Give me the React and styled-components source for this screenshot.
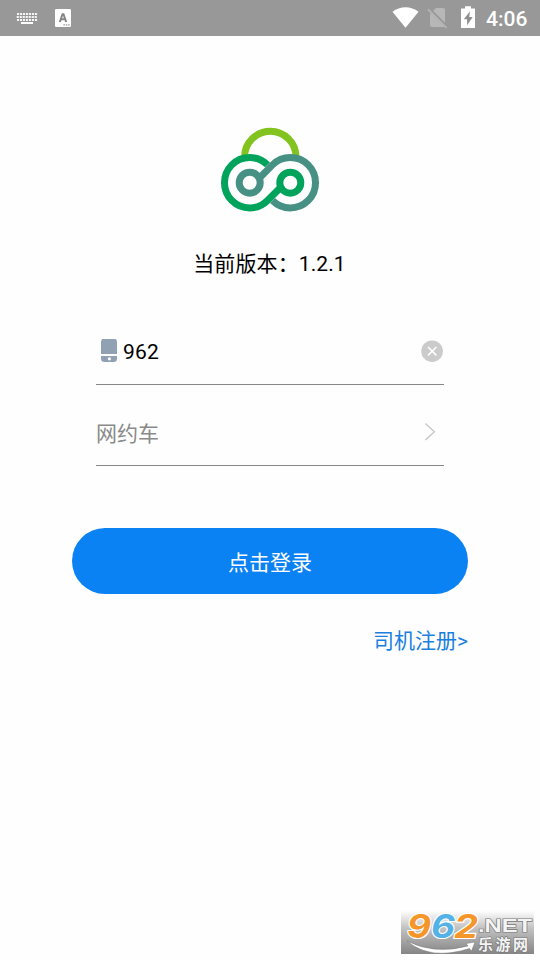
import React, { useState } from 'react';
import styled, { createGlobalStyle } from 'styled-components';

const GlobalStyle = createGlobalStyle`
* {
  box-sizing: border-box;
}
body {
  margin: 0;
  background: #fff;
  font-family: Roboto, 'Noto Sans CJK SC', sans-serif;
}
`;

const Screen = styled.div`
position: relative;
width: 540px;
height: 960px;
overflow: hidden;
background: #fefefe;
font-size: 21px;
line-height: 30px;
color: #000;
`;

const StatusBar = styled.header`
display: flex;
justify-content: space-between;
height: 36px;
background: #989898;
`;

const StatusGroup = styled.div`
display: flex;
`;

const Clock = styled.span`
width: 60px;
padding-left: 6px;
font-weight: 500;
font-size: 21px;
line-height: 38px;
color: #fff;
`;

const Content = styled.main`
display: flex;
flex-direction: column;
align-items: center;
padding: 91px 72px 0;
`;

const Version = styled.p`
margin: 36px 1px 0 0;
letter-spacing: 0.1px;
`;

const Form = styled.form`
display: flex;
flex-direction: column;
width: 100%;
margin-top: 41px;
`;

const Field = styled.div`
display: flex;
align-items: center;
height: ${(props) => props.$height}px;
margin: 0 24px;
padding-top: ${(props) => props.$top}px;
border-bottom: 1px solid #888;
`;

const PhoneInput = styled.input`
flex: 1;
min-width: 0;
height: 30px;
margin-left: 3px;
padding: 0;
border: 0;
outline: 0;
background: none;
font: inherit;
letter-spacing: 0.2px;
color: #000;
`;

const ServiceType = styled.span`
flex: 1;
padding-top: 2px;
color: #8a8a8a;
`;

const IconButton = styled.button`
display: flex;
padding: 0;
border: 0;
background: none;
`;

const LoginButton = styled.button`
height: 66px;
margin-top: 62px;
padding: 3px 0 0;
border: 0;
border-radius: 33px;
background: #0b82f4;
font: inherit;
color: #fff;
`;

const RegisterLink = styled.a`
align-self: flex-end;
margin-top: 32px;
color: #1a80e0;
`;

const Watermark = styled.div`
position: absolute;
left: 401px;
top: 911px;
width: 133px;
height: 43px;
background: linear-gradient(#fefefe, #c4c4c4 38%, #858585);
`;

function KeyboardIcon() {
  return (
    <svg width="44" height="36" viewBox="0 0 44 36" fill="#fff">
      {[13, 16, 19].map((y, row) =>
        [0, 1, 2, 3, 4, 5, 6].map((i) => (
          <rect key={y + '-' + i} x={17 + i * 3 - (row === 1 ? 0.3 : 0)} y={y} width="2.1" height="2" opacity="0.9" />
        ))
      )}
      <rect x="21" y="22" width="12" height="2" />
    </svg>
  );
}

function LetterIcon() {
  return (
    <svg width="30" height="36" viewBox="44 0 30 36">
      <rect x="55" y="9" width="16" height="18" rx="1.2" fill="#fff" />
      <path d="M59.8 22L62.5 14.2H63.5L66.2 22M60.9 19.2H65.1" fill="none" stroke="#858585" strokeWidth="2" />
      <path d="M63.4 24.8H70" fill="none" stroke="#999" strokeWidth="1.2" strokeDasharray="1.5 .9" />
    </svg>
  );
}

function SystemIcons() {
  return (
    <svg width="90" height="36" viewBox="390 0 90 36">
      <path d="M392.5 11.8C400 5.8 411 5.8 418.5 11.8L405.5 27.8Z" fill="#fff" />
      <path d="M436 8H443Q445 8 445 10V27H432Q430 27 430 25V14Z" fill="#b7b7b7" />
      <path d="M428.6 8.6L447.4 27.4" stroke="#989898" strokeWidth="3.4" />
      <path d="M428 9.4L446.6 28" stroke="#b7b7b7" strokeWidth="1.7" />
      <path d="M461 8.4H465V6.2H471V8.4H475V28H461Z" fill="#fff" />
      <path d="M470 11.2L463.8 19.2H467.1V25.2L472.7 17H469.2Z" fill="#8f8f8f" />
    </svg>
  );
}

function Logo() {
  return (
    <svg width="100" height="86" viewBox="0 0 100 86" fill="none" strokeWidth="7" style={{ display: 'block' }}>
      <path d="M24.6 30.2V30A25.7 25.7 0 0 1 76 30V30.2" stroke="#83c320" />
      <path d="M47.5 37.9A25.2 25.2 0 1 0 47.5 73.5L60.8 60.2" stroke="#00a35b" />
      <path d="M52.5 73.5A25.2 25.2 0 1 0 52.5 37.9L39.2 51.2" stroke="#479184" />
      <circle cx="29.7" cy="55.7" r="10.5" stroke="#479184" />
      <circle cx="70.3" cy="55.7" r="10.5" stroke="#00a35b" />
    </svg>
  );
}

function PhoneIcon() {
  return (
    <svg width="24" height="26" viewBox="96 339 24 26">
      <path d="M101 354V342Q101 338.5 104.5 338.5H113.5Q117 338.5 117 342V354Z" fill="#90a1b3" />
      <path d="M101 356H117V358.5Q117 362 113.5 362H104.5Q101 362 101 358.5Z" fill="#90a1b3" />
      <circle cx="109.4" cy="358.8" r="1.6" fill="#fff" />
    </svg>
  );
}

function ClearIcon() {
  return (
    <svg width="24" height="24" viewBox="420 340 24 24">
      <circle cx="432.1" cy="351.2" r="10.8" fill="#cbcbcb" />
      <path d="M428 347L436.4 355.4M436.4 347L428 355.4" stroke="#fff" strokeWidth="1.5" />
    </svg>
  );
}

function ArrowIcon() {
  return (
    <svg width="24" height="24" viewBox="420 421 24 24">
      <path d="M425.4 423.4L434.4 431.7L425.4 440" fill="none" stroke="#c8c8c8" strokeWidth="1.4" />
    </svg>
  );
}

function SiteMark() {
  return (
    <svg width="133" height="43" viewBox="401 911 133 43" overflow="visible" style={{ display: 'block' }}>
      <path d="M407 941Q434 955 468 946L466 943.5L475 942L471.5 951L469.5 948.5Q430 961 407 941Z" fill="#fff" stroke="#777" strokeWidth=".5" />
      <g fontFamily="Inter" fontWeight="700" fontStyle="italic" fontSize="33" stroke="#fff" strokeWidth="2.2" paintOrder="stroke">
        <text x="407" y="938" textLength="24" lengthAdjust="spacingAndGlyphs" fill="#f5962b">9</text>
        <text x="431" y="938" textLength="24" lengthAdjust="spacingAndGlyphs" fill="#54b2e7">6</text>
        <text x="454" y="938" textLength="24" lengthAdjust="spacingAndGlyphs" fill="#f5962b">2</text>
      </g>
      <text x="478" y="931.5" textLength="54" lengthAdjust="spacingAndGlyphs" fontFamily="Liberation Sans" fontWeight="700" fontSize="18" fill="#f4f4f4" stroke="#777" strokeWidth="1.2" paintOrder="stroke">.NET</text>
      <text x="478" y="950" textLength="50" fontFamily="Noto Sans CJK SC" fontWeight="700" fontSize="15" fill="#f4f4f4" stroke="#777" strokeWidth="1.2" paintOrder="stroke">乐游网</text>
    </svg>
  );
}

function App() {
  const [phone, setPhone] = useState('962');

  const handleSubmit = (e) => {
    e.preventDefault();
  };

  return (
    <Screen>
      <GlobalStyle />
      <StatusBar>
        <StatusGroup>
          <KeyboardIcon />
          <LetterIcon />
        </StatusGroup>
        <StatusGroup>
          <SystemIcons />
          <Clock>4:06</Clock>
        </StatusGroup>
      </StatusBar>
      <Content>
        <Logo />
        <Version>当前版本：1.2.1</Version>
        <Form onSubmit={handleSubmit}>
          <Field $height={65} $top={0}>
            <PhoneIcon />
            <PhoneInput value={phone} onChange={(e) => setPhone(e.target.value)} />
            <IconButton type="button" onClick={() => setPhone('')}>
              <ClearIcon />
            </IconButton>
          </Field>
          <Field $height={81} $top={15}>
            <ServiceType>网约车</ServiceType>
            <ArrowIcon />
          </Field>
          <LoginButton type="submit">点击登录</LoginButton>
          <RegisterLink>司机注册&gt;</RegisterLink>
        </Form>
      </Content>
      <Watermark>
        <SiteMark />
      </Watermark>
    </Screen>
  );
}

export default App;
